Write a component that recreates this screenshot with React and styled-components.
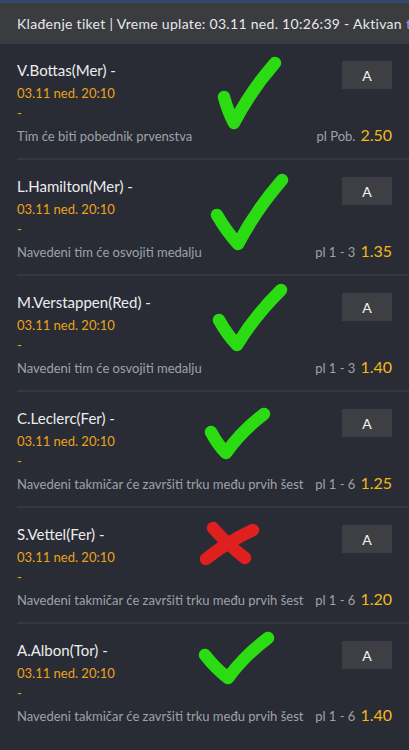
import React from "react";
import styled, { createGlobalStyle } from "styled-components";

const Global = createGlobalStyle`
  html, body { margin: 0; padding: 0; background: #292c35; }
  body { font-family: Lato, "Noto Sans", sans-serif; -webkit-font-smoothing: antialiased; }
  * { box-sizing: border-box; }
`;

const Page = styled.div`
  width: 409px;
  min-height: 750px;
  background: #292c35;
  overflow: hidden;
`;

const TopStrip = styled.div`
  height: 3px;
  background: #37496a;
`;

const Header = styled.div`
  height: 41px;
  background: #3b3c40;
  display: flex;
  align-items: center;
  padding-left: 17px;
  color: #e8e8ea;
  font-size: 14px;
  letter-spacing: 0.3px;
  white-space: nowrap;
  overflow: hidden;
`;

const Accent = styled.span`
  color: #a596e8;
  margin-left: 4px;
`;

const List = styled.div`
  display: flex;
  flex-direction: column;
`;

const Row = styled.div`
  position: relative;
  margin-left: 17px;
  padding: 16px 17px 12px 0;
  display: grid;
  grid-template-columns: 1fr auto;
  border-bottom: ${(p) => (p.$last ? "0" : "2px solid #353842")};
`;

const Info = styled.div`
  display: flex;
  flex-direction: column;
`;

const Name = styled.div`
  color: #ececee;
  font-size: 15px;
  line-height: 20px;
`;

const DateLine = styled.div`
  color: #eba21c;
  font-size: 13px;
  line-height: 20px;
  margin-top: 3px;
`;

const Dash = styled.div`
  color: #eba21c;
  font-size: 13px;
  line-height: 20px;
`;

const Desc = styled.div`
  color: #9fa2a8;
  font-size: 13px;
  line-height: 20px;
  margin-top: 3px;
  white-space: nowrap;
`;

const Side = styled.div`
  display: flex;
  flex-direction: column;
  align-items: flex-end;
  justify-content: space-between;
`;

const Pick = styled.div`
  width: 50px;
  height: 28px;
  margin-top: 1px;
  background: #3d3f45;
  color: #f2f2f2;
  font-size: 14px;
  display: flex;
  align-items: center;
  justify-content: center;
`;

const Odds = styled.div`
  line-height: 20px;
  white-space: nowrap;
  display: flex;
  align-items: baseline;
  gap: 5px;
`;

const OddsLabel = styled.span`
  color: #9fa2a8;
  font-size: 13px;
`;

const OddsValue = styled.span`
  color: #f3b919;
  font-size: 16px;
`;

const Mark = styled.svg`
  position: absolute;
  left: 0;
  top: 0;
  width: 300px;
  height: 116px;
  pointer-events: none;
  overflow: visible;
`;

const GREEN = "#2cdc12";
const RED = "#e01f1f";

const Check = ({ a, b, c }) => (
  <Mark viewBox="0 0 300 116">
    <path
      d={`M${a[0]} ${a[1]} Q${(a[0] + b[0]) / 2 - 1} ${(a[1] + b[1]) / 2 + 2} ${b[0]} ${b[1]} Q${(b[0] + c[0]) / 2 - 4} ${(b[1] + c[1]) / 2 - 2} ${c[0]} ${c[1]}`}
      fill="none"
      stroke={GREEN}
      strokeWidth="12.5"
      strokeLinecap="round"
      strokeLinejoin="round"
    />
  </Mark>
);

const Cross = () => (
  <Mark viewBox="0 0 300 116">
    <path
      d="M196 20 Q210 36 228 50 M236 22 Q210 34 189 51"
      fill="none"
      stroke={RED}
      strokeWidth="12.5"
      strokeLinecap="round"
    />
  </Mark>
);

const bets = [
  {
    name: "V.Bottas(Mer) -",
    desc: "Tim će biti pobednik prvenstva",
    label: "pl Pob.",
    odd: "2.50",
    mark: { a: [207, 53], b: [217, 79], c: [258, 19] },
  },
  {
    name: "L.Hamilton(Mer) -",
    desc: "Navedeni tim će osvojiti medalju",
    label: "pl 1 - 3",
    odd: "1.35",
    mark: { a: [200, 55], b: [221, 84], c: [265, 20] },
  },
  {
    name: "M.Verstappen(Red) -",
    desc: "Navedeni tim će osvojiti medalju",
    label: "pl 1 - 3",
    odd: "1.40",
    mark: { a: [202, 44], b: [220, 69], c: [264, 14] },
  },
  {
    name: "C.Leclerc(Fer) -",
    desc: "Navedeni takmičar će završiti trku među prvih šest",
    label: "pl 1 - 6",
    odd: "1.25",
    mark: { a: [194, 40], b: [209, 61], c: [247, 22] },
  },
  {
    name: "S.Vettel(Fer) -",
    desc: "Navedeni takmičar će završiti trku među prvih šest",
    label: "pl 1 - 6",
    odd: "1.20",
    cross: true,
  },
  {
    name: "A.Albon(Tor) -",
    desc: "Navedeni takmičar će završiti trku među prvih šest",
    label: "pl 1 - 6",
    odd: "1.40",
    mark: { a: [188, 31], b: [211, 54], c: [251, 14] },
  },
];

export default function App() {
  return (
    <Page>
      <Global />
      <TopStrip />
      <Header>
        Klađenje tiket | Vreme uplate: 03.11 ned. 10:26:39 - Aktivan
        <Accent>tiket</Accent>
      </Header>
      <List>
        {bets.map((b, i) => (
          <Row key={i} $last={i === bets.length - 1}>
            <Info>
              <Name>{b.name}</Name>
              <DateLine>03.11 ned. 20:10</DateLine>
              <Dash>-</Dash>
              <Desc>{b.desc}</Desc>
            </Info>
            <Side>
              <Pick>A</Pick>
              <Odds>
                <OddsLabel>{b.label}</OddsLabel>
                <OddsValue>{b.odd}</OddsValue>
              </Odds>
            </Side>
            {b.cross ? <Cross /> : <Check {...b.mark} />}
          </Row>
        ))}
      </List>
    </Page>
  );
}
